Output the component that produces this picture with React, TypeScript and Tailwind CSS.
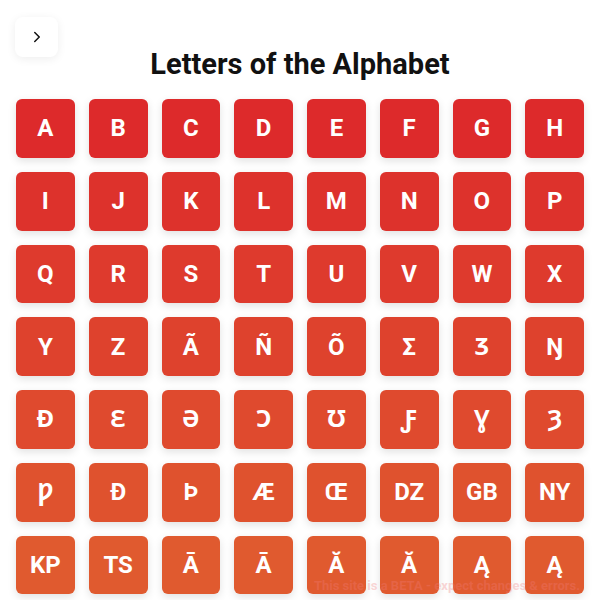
import { ChevronRight } from 'lucide-react';

// one colour per row, red at the top shading to orange at the bottom
const rows: { bg: string; letters: string[] }[] = [
  { bg: 'bg-[#dd2a2b]', letters: ['A', 'B', 'C', 'D', 'E', 'F', 'G', 'H'] },
  { bg: 'bg-[#dd322c]', letters: ['I', 'J', 'K', 'L', 'M', 'N', 'O', 'P'] },
  { bg: 'bg-[#de3a2d]', letters: ['Q', 'R', 'S', 'T', 'U', 'V', 'W', 'X'] },
  { bg: 'bg-[#de422d]', letters: ['Y', 'Z', 'Ã', 'Ñ', 'Õ', 'Σ', 'Ʒ', 'Ŋ'] },
  { bg: 'bg-[#df4a2e]', letters: ['Ɖ', 'Ɛ', 'Ə', 'Ɔ', 'Ʊ', 'Ƒ', 'Ɣ', 'Ȝ'] },
  { bg: 'bg-[#df522e]', letters: ['Ƿ', 'Đ', 'Þ', 'Æ', 'Œ', 'DZ', 'GB', 'NY'] },
  { bg: 'bg-[#e05a2f]', letters: ['KP', 'TS', 'Ā', 'Ā', 'Ă', 'Ă', 'Ą', 'Ą'] },
];

export default function App() {
  return (
    <div className="relative min-h-[600px] bg-white px-4 font-['Roboto','Noto_Sans',sans-serif]">
      <button className="absolute left-[15px] top-[17px] flex h-[40px] w-[43px] items-center justify-center rounded-lg bg-white shadow-[0_2px_10px_rgba(0,0,0,0.07)] text-[#111]">
        <ChevronRight size={18} strokeWidth={2} />
      </button>

      <h1 className="pt-[47px] text-center text-[29px] font-bold leading-[34px] text-[#111]">
        Letters of the Alphabet
      </h1>

      <div className="mt-[18px] grid grid-cols-8 gap-[14px]">
        {rows.map((row, r) =>
          row.letters.map((l, i) => (
            <div
              key={`${r}-${i}`}
              className={`${row.bg} flex aspect-square items-center justify-center rounded-md text-[24px] font-bold text-white shadow-[0_3px_8px_rgba(0,0,0,0.12)]`}
            >
              {l}
            </div>
          ))
        )}
      </div>

      <div className="pointer-events-none absolute bottom-[5px] right-[20px] text-[13px] font-bold text-[#f27c7c] opacity-30">
        This site is a BETA - expect changes &amp; errors.
      </div>
    </div>
  );
}
